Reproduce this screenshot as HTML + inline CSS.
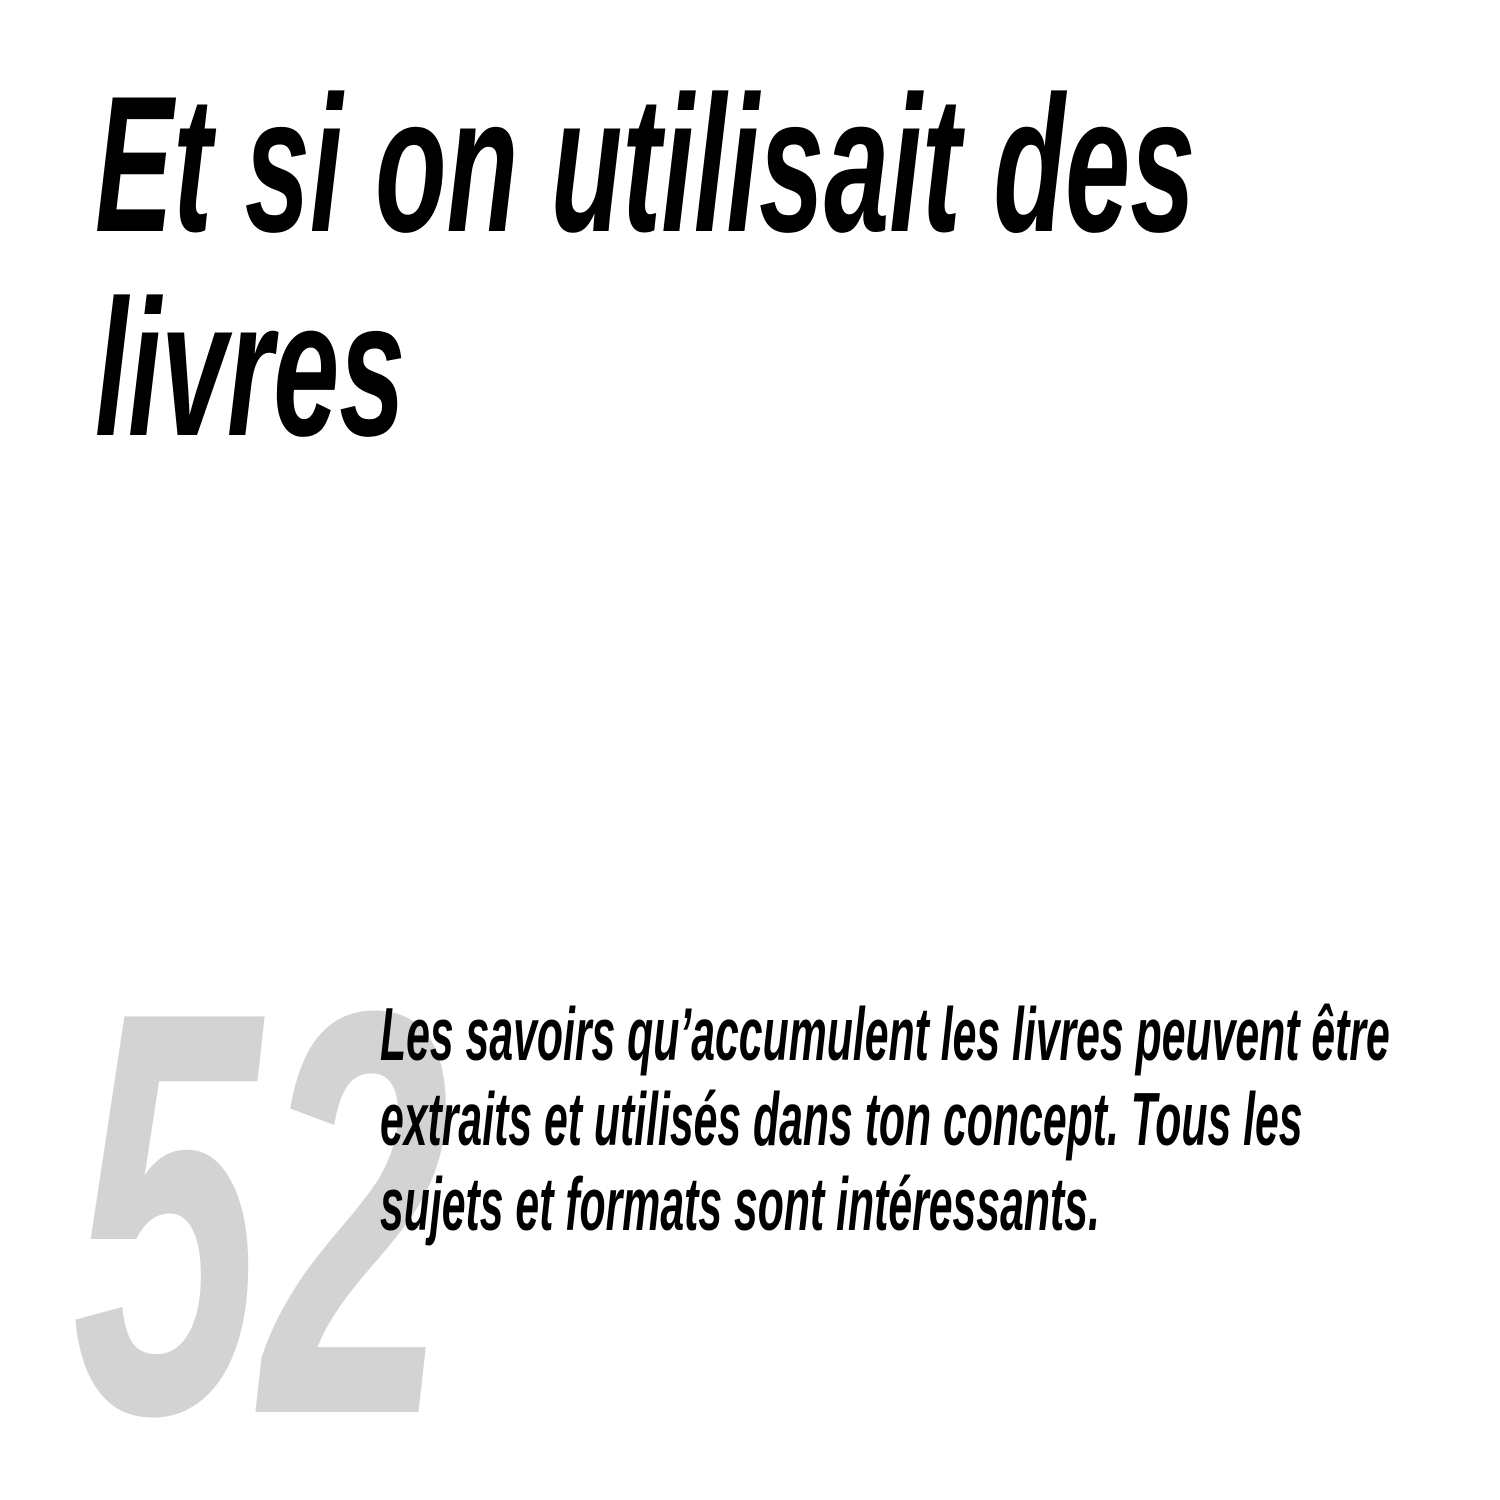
<!DOCTYPE html>
<html><head><meta charset="utf-8"><style>
html,body{margin:0;padding:0;background:#fff;width:1500px;height:1500px;overflow:hidden;position:relative}
.t{position:absolute;left:0;white-space:nowrap;font-family:"Liberation Sans",sans-serif;font-weight:bold;font-style:italic;transform-origin:0 0;line-height:1}
</style></head><body>
<div class="t" style="top:68px;left:95px;font-size:194px;color:#000;transform:scaleX(0.604)">Et si on utilisait des</div>
<div class="t" style="top:272px;left:95px;font-size:194px;color:#000;transform:scaleX(0.612)">livres</div>
<div class="t" style="top:925px;left:72px;font-size:575px;color:#d3d3d3;transform:scaleX(0.59)">52</div>
<div class="t" style="top:997px;left:380px;font-size:75px;color:#000;transform:scaleX(0.57)">Les savoirs qu’accumulent les livres peuvent être</div>
<div class="t" style="top:1082px;left:380px;font-size:75px;color:#000;transform:scaleX(0.57)">extraits et utilisés dans ton concept. Tous les</div>
<div class="t" style="top:1167px;left:380px;font-size:75px;color:#000;transform:scaleX(0.57)">sujets et formats sont intéressants.</div>
</body></html>
